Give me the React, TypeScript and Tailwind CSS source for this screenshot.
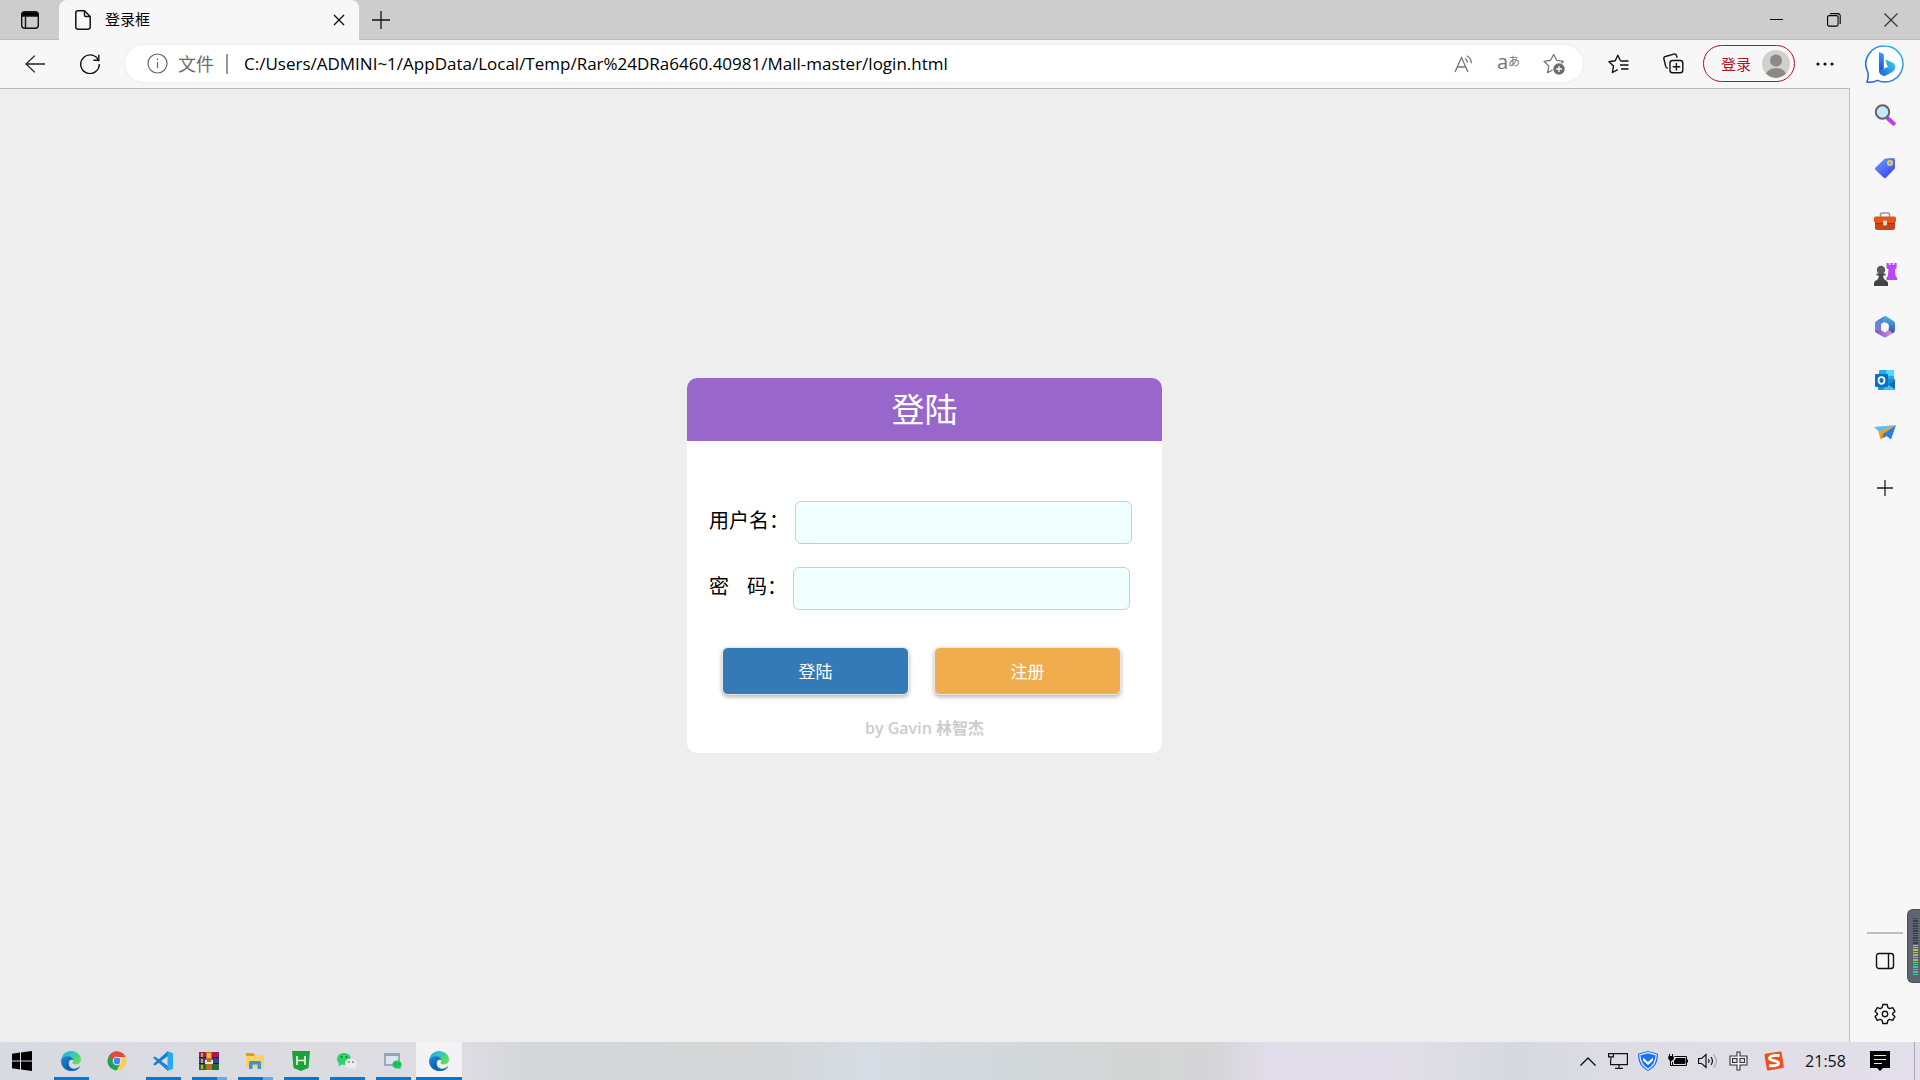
import { useState } from 'react';
import type { ReactNode } from 'react';

interface IconButtonProps {
  label: string;
  className?: string;
  children: ReactNode;
}

function IconButton({ label, className = '', children }: IconButtonProps) {
  return (
    <button type="button" aria-label={label} className={`flex shrink-0 items-center justify-center ${className}`}>
      {children}
    </button>
  );
}

function TabStrip() {
  return (
    <header className="flex h-10 items-stretch bg-[#cdcdcd] shadow-[inset_0_-1px_0_#bcbcbc]">
      <IconButton label="标签页操作" className="w-[59px]">
        <svg width="20" height="20" viewBox="0 0 20 20" fill="none" stroke="#111" strokeWidth="1.4">
          <rect x="1.7" y="2" width="16.6" height="16.3" rx="3" />
          <path d="M5.5 6v12" />
          <path d="M2 6V4.5A2.5 2.5 0 0 1 4.500 2h11A2.500 2.500 0 0 1 18 4.500V6z" fill="#000" />
        </svg>
      </IconButton>
      <div className="flex w-[300px] items-center rounded-t-lg bg-[#f7f7f7] pl-4 pr-2">
        <svg width="16" height="20" viewBox="0 0 16 20" fill="none" stroke="#111" strokeWidth="1.5" strokeLinejoin="round">
          <path d="M3 .8h6.500L15.200 6.500V17a2.200 2.200 0 0 1-2.200 2.200H3A2.200 2.200 0 0 1 .8 17V3A2.200 2.200 0 0 1 3 .8z" />
          <path d="M9.500 1v4.200a1.300 1.300 0 0 0 1.300 1.300H15" />
        </svg>
        <span className="ml-3.5 flex-1 pb-0.5 text-[15px] leading-5">登录框</span>
        <IconButton label="关闭标签页" className="size-6">
          <svg width="12" height="12" viewBox="0 0 12 12" stroke="#111" strokeWidth="1.4">
            <path d="M1 1l10 10M11 1L1 11" />
          </svg>
        </IconButton>
      </div>
      <IconButton label="新建标签页" className="w-11">
        <svg width="18" height="18" viewBox="0 0 18 18" stroke="#111" strokeWidth="1.3">
          <path d="M9 0v18M0 9h18" />
        </svg>
      </IconButton>
      <div className="ml-auto flex">
        <IconButton label="最小化" className="w-[57px]">
          <svg width="14" height="14" viewBox="0 0 14 14" stroke="#000">
            <path d="M0 6.500h13" />
          </svg>
        </IconButton>
        <IconButton label="还原" className="w-[57px]">
          <svg width="14" height="14" viewBox="0 0 14 14" fill="none" stroke="#000" strokeWidth="1.100">
            <rect x=".6" y="2.600" width="10.500" height="10.500" rx="1.500" />
            <path d="M3 .6h8a2.200 2.200 0 0 1 2.200 2.200V11" />
          </svg>
        </IconButton>
        <IconButton label="关闭" className="w-[58px]">
          <svg width="14" height="14" viewBox="0 0 14 14" stroke="#333" strokeWidth="1.200">
            <path d="M.5 .5l13 13M13.500 .5l-13 13" />
          </svg>
        </IconButton>
      </div>
    </header>
  );
}

function Toolbar() {
  const [url, setUrl] = useState('C:/Users/ADMINI~1/AppData/Local/Temp/Rar%24DRa6460.40981/Mall-master/login.html');

  return (
    <div className="flex h-12 items-center gap-[15px] bg-[#f7f7f7] pb-px pl-[15px] pr-[5px]">
      <IconButton label="返回" className="size-10">
        <svg width="20" height="18" viewBox="0 0 20 18" fill="none" stroke="#222" strokeWidth="1.300">
          <path d="M9.800 .6L1 9l8.800 8.400M1 9h19" />
        </svg>
      </IconButton>
      <IconButton label="刷新" className="size-10">
        <svg width="20" height="20" viewBox="0 0 20 20" fill="none" stroke="#111" strokeWidth="1.400">
          <path d="M18.800 7.200A9.300 9.300 0 1 0 19.300 10" />
          <path d="M18.800 .8v5.500h-5.500" />
        </svg>
      </IconButton>

      {/* Address bar */}
      <div className="flex h-[37px] min-w-0 flex-1 items-center rounded-full bg-white pl-[22px] pr-[7px] shadow-[0_0_3px_#e2e2e2]">
        <svg width="21" height="21" viewBox="0 0 21 21" fill="none" stroke="#6b6b6b" strokeWidth="1.200" className="shrink-0">
          <circle cx="10.500" cy="10.500" r="9.500" />
          <path d="M10.500 9v6.200M10.500 5.500v1.700" />
        </svg>
        <span className="ml-2.5 shrink-0 text-lg leading-6 text-[#6b6b6b]">文件</span>
        <span className="ml-3 mr-4 h-5 w-0.5 shrink-0 bg-[#9a9a9a]" />
        <input
          aria-label="地址栏"
          value={url}
          onChange={(e) => setUrl(e.target.value)}
          className="min-w-0 flex-1 bg-transparent text-[17px] leading-6 text-black outline-none"
        />
        <IconButton label="大声朗读" className="h-8 w-[45px]">
          <svg width="20" height="18" viewBox="0 0 20 18" fill="none" stroke="#757575" strokeWidth="1.300">
            <path d="M1 17L7.500 2.500L14 17M3.200 12h8.600" />
            <path d="M11 3.500c1.500 .8 2.300 2.200 2.400 4M13 .8c2.700 1.500 4.200 4 4.300 7.500" />
          </svg>
        </IconButton>
        <IconButton label="翻译" className="h-8 w-[45px] pb-1 text-[#757575]">
          <span className="text-xl leading-6">a</span>
          <span className="text-xs leading-6">あ</span>
        </IconButton>
        <IconButton label="添加到收藏夹" className="h-8 w-[45px]">
          <svg width="22" height="22" viewBox="0 0 22 22" fill="none" stroke="#757575" strokeWidth="1.300" strokeLinejoin="round">
            <path d="M20.500 8.300l-6.800-1L10.700 1.500L7.600 7.300L1 8.300l4.800 4.700L4.600 19.600l5-2.600" />
            <path d="M20.500 8.300l-2.200 2" />
            <circle cx="16" cy="16" r="5.700" fill="#6b6b6b" stroke="none" />
            <path d="M16 13v6M13 16h6" stroke="#fff" />
          </svg>
        </IconButton>
      </div>

      <IconButton label="收藏夹" className="size-10">
        <svg width="21" height="20" viewBox="0 0 21 20" fill="none" stroke="#111" strokeWidth="1.400" strokeLinejoin="round">
          <path d="M12.500 6.800L9.800 1.200L7.200 6.800L1 7.700l4.500 4.400L4.400 18.500l5.400-2.900" />
          <path d="M12.500 7h8M12 11h8.500M13 15h7.500" />
        </svg>
      </IconButton>
      <IconButton label="集锦" className="size-10">
        <svg width="21" height="21" viewBox="0 0 21 21" fill="none" stroke="#111" strokeWidth="1.400" strokeLinejoin="round">
          <rect x="7" y="7.500" width="12.800" height="12.300" rx="2.500" />
          <path d="M13.400 10v7.500M9.700 13.700h7.500" />
          <path d="M4.800 15.200c-1.200 0-1.800-.8-2.100-1.800L.9 6c-.3-1.200 .3-2.200 1.500-2.500L11 1.100c1.200-.3 2.100 .3 2.500 1.500l.6 2.200" />
        </svg>
      </IconButton>
      <div className="-ml-[5px] flex items-center gap-2.5">
        <button
          type="button"
          className="flex h-[37px] w-[92px] items-center justify-between rounded-full border border-[#b0141c] pl-[17px] pr-1 text-[15px] leading-5 text-[#b0141c]"
        >
          登录
          <svg width="28" height="28" viewBox="0 0 28 28">
            <circle cx="14" cy="14" r="14" fill="#d2d0ce" />
            <circle cx="14" cy="10.500" r="6" fill="#8c8884" />
            <path d="M4 23.500c1.800-3.600 5.400-5.300 10-5.300s8.200 1.700 10 5.300A14 14 0 0 1 4 23.500z" fill="#8c8884" />
          </svg>
        </button>
        <IconButton label="设置及其他" className="size-10">
          <svg width="18" height="4" viewBox="0 0 18 4" fill="#111">
            <circle cx="2" cy="2" r="1.600" />
            <circle cx="9" cy="2" r="1.600" />
            <circle cx="16" cy="2" r="1.600" />
          </svg>
        </IconButton>
      </div>
    </div>
  );
}

function LoginCard() {
  const [username, setUsername] = useState('');
  const [password, setPassword] = useState('');

  const inputClass = 'h-[43px] w-[337px] rounded-md border border-[#ccc] bg-[#f0ffff] px-3 text-base outline-none';
  const buttonClass =
    'h-12 w-[187px] rounded-md border border-[#e8e8e8] pt-0.5 text-[17px] leading-6 text-white shadow-[0_2px_4px_rgba(0,0,0,0.3)]';

  return (
    <form className="w-[475px] overflow-hidden rounded-[10px] bg-white" onSubmit={(e) => e.preventDefault()}>
      <h1 className="bg-[#9966cc] text-center text-[33px] leading-[63px] text-white">登陆</h1>

      <div className="flex flex-col gap-[23px] pl-[22px] pt-[60px]">
        <div className="flex items-center gap-1.5">
          <label htmlFor="username" className="pb-1 text-xl leading-7">
            用户名：
          </label>
          <input
            id="username"
            type="text"
            value={username}
            onChange={(e) => setUsername(e.target.value)}
            className={inputClass}
          />
        </div>
        <div className="flex items-center gap-1.5">
          <label htmlFor="password" className="flex gap-[18px] pb-1 text-xl leading-7">
            <span>密</span>
            <span>码：</span>
          </label>
          <input
            id="password"
            type="password"
            value={password}
            onChange={(e) => setPassword(e.target.value)}
            className={inputClass}
          />
        </div>
      </div>

      <div className="flex gap-[25px] pl-[35px] pt-[37px]">
        <button type="submit" className={`${buttonClass} bg-[#337ab7]`}>
          登陆
        </button>
        <button type="button" className={`${buttonClass} bg-[#f0ad4e]`}>
          注册
        </button>
      </div>

      <p className="pb-[13px] pt-[21px] text-center text-base font-semibold leading-6 text-[#ccc]">by Gavin 林智杰</p>
    </form>
  );
}

const sidebarApps = [
  {
    label: '搜索',
    icon: (
      <svg width="22" height="22" viewBox="0 0 22 22">
        <path d="M14 14.500l5.500 5" stroke="#c03bf0" strokeWidth="4.200" strokeLinecap="round" />
        <circle cx="8.500" cy="8" r="6.700" fill="#c5e6fb" stroke="#626262" strokeWidth="2" />
      </svg>
    ),
  },
  {
    label: '购物',
    icon: (
      <svg width="22" height="22" viewBox="0 0 22 22">
        <defs>
          <linearGradient id="tag" x1="0" y1="0" x2=".7" y2="1">
            <stop stopColor="#67a2fa" />
            <stop offset="1" stopColor="#3b48f2" />
          </linearGradient>
        </defs>
        <path d="M12 1.500l7-.5a2 2 0 0 1 2 2v7.500c0 .8-.3 1.300-.8 1.800l-8 8.300c-.8 .8-1.800 .8-2.600 0l-8-7.600c-.8-.8-.8-1.700 0-2.500l8.500-8.300c.5-.5 1.100-.7 1.900-.7z" fill="url(#tag)" />
        <circle cx="16" cy="6" r="2.300" fill="#8fa6c8" stroke="#fbd52e" strokeWidth="1.500" />
      </svg>
    ),
  },
  {
    label: '工具',
    icon: (
      <svg width="24" height="20" viewBox="0 0 24 20">
        <path d="M7.500 6V3.500A1.500 1.500 0 0 1 9 2h6a1.500 1.500 0 0 1 1.500 1.500V6" fill="none" stroke="#999" strokeWidth="1.600" />
        <path d="M2 10h20v7a2 2 0 0 1-2 2H4a2 2 0 0 1-2-2z" fill="#cb4514" />
        <path d="M2.500 5.500h19a1.500 1.500 0 0 1 1.500 1.500v3c0 1-1 2-2 2H3c-1 0-2-1-2-2V7a1.500 1.500 0 0 1 1.500-1.500z" fill="#e3571c" />
        <path d="M2 12h20v1H2z" fill="#a5350c" />
        <rect x="10" y="9.500" width="4" height="5" rx="1" fill="#d8d8d8" />
      </svg>
    ),
  },
  {
    label: '游戏',
    icon: (
      <svg width="24" height="24" viewBox="0 0 24 24">
        <path d="M13.500 1h2.300v2h1.600V1h2.300v2h1.600V1h2.300v5l-1.600 1.500l.6 6.500l1.400 1.500V18H13.500v-2.500l1.400-1.500l.6-6.500L13.500 6z" fill="#b847f5" />
        <circle cx="8" cy="8" r="4.200" fill="#5a5a5a" />
        <path d="M3.500 11.500h9v2h-2.300c0 2.500 1 4 2.800 5.500H3c1.800-1.500 2.800-3 2.800-5.500H3.500z" fill="#4a4a4a" />
        <path d="M2.500 18.500h11l1.500 2V24H1v-3.500z" fill="#424242" />
      </svg>
    ),
  },
  {
    label: 'Microsoft 365',
    icon: (
      <svg width="22" height="24" viewBox="0 0 22 24">
        <defs>
          <linearGradient id="m1" x1="1" y1="0" x2="0" y2="1">
            <stop stopColor="#3d73d6" />
            <stop offset="1" stopColor="#7c8be8" />
          </linearGradient>
          <linearGradient id="m2" x1="0" y1="0" x2="1" y2="0">
            <stop stopColor="#8550b6" />
            <stop offset="1" stopColor="#d293e4" />
          </linearGradient>
          <linearGradient id="m3" x1="0" y1="0" x2="0" y2="1">
            <stop stopColor="#48b6e8" />
            <stop offset="1" stopColor="#3c4eb2" />
          </linearGradient>
        </defs>
        <path d="M9.500 1.800L2.500 6A3 3 0 0 0 1 8.500v8l6-1.500V9l4.500-3l1-4.500c-1-.6-2-.4-3 .3z" fill="url(#m1)" />
        <path d="M1 15.500c0 1 .5 2 1.500 2.600l7 4c1 .6 2 .6 3 0l6-3.600l-4-3.500l-3.500 2.500L6 14.500z" fill="url(#m2)" />
        <path d="M10.500 1.500c1-.4 1.600-.3 2.500 .3L19.500 6A3 3 0 0 1 21 8.500V15c0 1.500-.8 2.700-2.500 3.600L14.500 15V9L8 6z" fill="url(#m3)" />
        <circle cx="11" cy="12" r="3.800" fill="#f7f7f7" />
      </svg>
    ),
  },
  {
    label: 'Outlook',
    icon: (
      <svg width="22" height="22" viewBox="0 0 22 22">
        <rect x="5" y="1" width="15" height="13" rx="1" fill="#28a8ea" />
        <path d="M12 1h7a1 1 0 0 1 1 1v5h-8z" fill="#50d9ff" />
        <path d="M4 10h17v10a1 1 0 0 1-1 1H5a1 1 0 0 1-1-1z" fill="#1490df" />
        <path d="M21 10.500L8 21h12.500c.5 0 .5-.5 .5-1z" fill="#37c2f5" />
        <path d="M21 11l-7 4.500l7 4.500z" fill="#1068ad" />
        <rect x="1" y="5" width="13" height="13" rx="1.200" fill="#0a70c6" />
        <ellipse cx="7.500" cy="11.500" rx="3" ry="3.300" fill="none" stroke="#fff" strokeWidth="1.700" />
      </svg>
    ),
  },
  {
    label: 'Drop',
    icon: (
      <svg width="22" height="18" viewBox="0 0 22 18">
        <path d="M22 1L0 3l5.500 5z" fill="#5cbcf4" />
        <path d="M22 1l-5 14.500l-4.500-3.500l-2.500 2l-2-4.500z" fill="#2b7de6" />
        <path d="M22 1L4.500 7.500l2 8L9 10z" fill="#f3a01c" />
        <path d="M9 10l-2.500 5.500l4.500-3.500z" fill="#b86b10" />
      </svg>
    ),
  },
];

function Sidebar() {
  return (
    <aside className="flex w-[70px] shrink-0 flex-col items-center bg-[#f7f7f7] pb-0.5">
      <IconButton label="必应" className="h-12 w-full">
        <svg width="40" height="40" viewBox="0 0 40 40">
          <defs>
            <linearGradient id="bubble" x1="1" y1="0" x2="0" y2="1">
              <stop stopColor="#28c1f3" />
              <stop offset="1" stopColor="#2155d9" />
            </linearGradient>
            <linearGradient id="bingStem" x1="0" y1="0" x2="0" y2="1">
              <stop stopColor="#2fa4f0" />
              <stop offset="1" stopColor="#1b4fd6" />
            </linearGradient>
            <linearGradient id="bingBowl" x1="1" y1="0" x2="0" y2="1">
              <stop stopColor="#35d6e6" />
              <stop offset="1" stopColor="#1f62e0" />
            </linearGradient>
          </defs>
          <path
            d="M20 2a18 18 0 1 1-7.500 34.400c-3 1.500-6 2.200-10.500 1.600c1.600-3.500 1.300-6 1-9.500A18 18 0 0 1 20 2z"
            fill="#fff"
            stroke="url(#bubble)"
            strokeWidth="1.500"
          />
          <path d="M14 8l4 1.800c.5 .3 .8 .7 .8 1.300V25L14 28z" fill="url(#bingStem)" />
          <path d="M20.500 15.500l7 3c2 1 2.700 2.500 2.700 4.500c0 2.300-1 3.700-3 5l-5.700 3.300c-1.500 .8-3 .8-4.500 0C15 30.200 14 29 14 27l9.500-4.500l-1.500-1z" fill="url(#bingBowl)" />
        </svg>
      </IconButton>
      {sidebarApps.map((app) => (
        <IconButton key={app.label} label={app.label} className="h-[53px] w-full pr-px">
          {app.icon}
        </IconButton>
      ))}
      <IconButton label="自定义" className="h-[58px] w-full">
        <svg width="16" height="16" viewBox="0 0 16 16" stroke="#222" strokeWidth="1.300">
          <path d="M8 0v16M0 8h16" />
        </svg>
      </IconButton>

      <div className="mt-auto h-0.5 w-9 bg-[#bdbdbd]" />
      <IconButton label="隐藏边栏" className="h-[53px] w-full">
        <svg width="20" height="18" viewBox="0 0 20 18" fill="none" stroke="#111" strokeWidth="1.400">
          <rect x="1.500" y="1.500" width="17" height="15" rx="2.500" />
          <path d="M13.500 1.500v15" />
        </svg>
      </IconButton>
      <IconButton label="设置" className="h-[53px] w-full">
        <svg width="22" height="22" viewBox="0 0 22 22" fill="none" stroke="#111" strokeWidth="1.400" strokeLinejoin="round">
          <path d="M8.800 1.500h4.400l.7 3.100l1.800 1l3-1l2.200 3.800l-2.300 2.100v1l2.300 2.100l-2.200 3.800l-3-1l-1.800 1l-.7 3.100H8.800l-.7-3.100l-1.800-1l-3 1l-2.200-3.800l2.300-2.100v-1L1.100 8.400l2.200-3.800l3 1l1.800-1z" />
          <circle cx="11" cy="11" r="2.700" />
        </svg>
      </IconButton>
    </aside>
  );
}

function EdgeIcon() {
  return (
    <svg width="20" height="20" viewBox="0 0 20 20">
      <defs>
        <linearGradient id="edgeTop" x1="0" y1="0" x2="1" y2=".6">
          <stop stopColor="#2aa5e0" />
          <stop offset=".5" stopColor="#35c5c0" />
          <stop offset="1" stopColor="#66dd4f" />
        </linearGradient>
        <linearGradient id="edgeLow" x1="0" y1="0" x2=".6" y2="1">
          <stop stopColor="#1b8ad8" />
          <stop offset="1" stopColor="#0f55a5" />
        </linearGradient>
      </defs>
      <path d="M.2 9C.8 3.800 5 0 10 0c5.500 0 10 3.800 10 8.600c0 3-2.200 4.900-5 4.900c-2.400 0-3.600-.8-3.600-1.500c0-.5 .8-.9 .8-2.300C12.200 7.500 10 5.800 7 5.800C4 5.800 1.500 7 .2 9z" fill="url(#edgeTop)" />
      <path d="M.1 10C.2 7 3.500 5.200 7 5.200c3 0 5.300 1.800 5.400 4C10 8 7.500 9.800 7.500 12.800c0 3.500 3 6 6.500 5.500c-1.200 1-2.500 1.500-4 1.600C4.500 20 0 15.500 .1 10z" fill="url(#edgeLow)" />
      <path d="M8.500 9.500c-2 2.800-.8 7 3 8c2.600 .6 5-.2 6.800-2c.4-.4 .8 0 .5 .5c-1.800 3-5 4.300-8.300 3.900C6.500 19 4.500 12.500 8.500 9.500z" fill="#1166b8" />
    </svg>
  );
}

type TaskState = 'idle' | 'running' | 'stacked' | 'active';

const taskbarApps: { label: string; state: TaskState; icon: ReactNode }[] = [
  { label: 'Microsoft Edge', state: 'running', icon: <EdgeIcon /> },
  {
    label: 'Google Chrome',
    state: 'idle',
    icon: (
      <svg width="20" height="20" viewBox="0 0 20 20">
        <circle cx="10" cy="10" r="9.500" fill="#fdd04a" />
        <path d="M10 10L1.800 5.200A9.500 9.500 0 0 1 18.200 5.300L18.500 6H10z" fill="#de4b3f" />
        <path d="M10 10L1.800 5.200A9.500 9.500 0 0 0 9.600 19.500L13.500 12z" fill="#1ea25a" />
        <path d="M10 .5a9.500 9.500 0 0 1 8.300 5.300H10l-4 3.500l-4.200-4A9.500 9.500 0 0 1 10 .5z" fill="#de4b3f" />
        <circle cx="10" cy="10" r="4.300" fill="#fff" />
        <circle cx="10" cy="10" r="3.400" fill="#4286f5" />
      </svg>
    ),
  },
  {
    label: 'Visual Studio Code',
    state: 'running',
    icon: (
      <svg width="20" height="20" viewBox="0 0 20 20">
        <path d="M0 6.800l2-1.300L15 15v5z" fill="#1a86cf" />
        <path d="M0 13.200l2 1.300L15 5V0z" fill="#1580c8" />
        <path d="M14.500 0L20 2.200v15.600L14.500 20z" fill="#27a9f3" />
      </svg>
    ),
  },
  {
    label: 'WinRAR',
    state: 'stacked',
    icon: (
      <svg width="20" height="20" viewBox="0 0 20 20">
        <path d="M0 1h20v6H0z" fill="#a51d4d" />
        <path d="M0 7h20v6H0z" fill="#3f3f96" />
        <path d="M0 13h20v6H0z" fill="#21702f" />
        <path d="M0 6h20v1H0zM0 12h20v1H0z" fill="#20201f" />
        <path d="M2 2h2v4H2zM2 8h2v4H2zM2 14h2v4H2z" fill="#d9a23a" />
        <path d="M7 1h6v18H7z" fill="#b96f1d" />
        <path d="M8 2h4v5H8z" fill="#f5b63b" />
        <path d="M6 9h2v4H6zM12 9h2v4h-2zM8 11h4v2H8z" fill="#e9e4d8" />
      </svg>
    ),
  },
  {
    label: '文件资源管理器',
    state: 'stacked',
    icon: (
      <svg width="20" height="18" viewBox="0 0 20 18">
        <path d="M1 1h7l2 2v3H1z" fill="#e09a13" />
        <path d="M1 4h8l1.500-1H19v13H1z" fill="#fbd367" />
        <path d="M4 17V10.500A1.500 1.500 0 0 1 5.500 9h9a1.500 1.500 0 0 1 1.500 1.500V17h-3.500v-4.500h-5V17z" fill="#3b93d9" />
      </svg>
    ),
  },
  {
    label: 'HBuilder X',
    state: 'running',
    icon: (
      <svg width="20" height="20" viewBox="0 0 20 20">
        <path d="M1 0h18l-1.500 17l-7.500 3l-7.500-3z" fill="#1ea03a" />
        <path d="M6 5v9M14 5v9M6 9.500h8" stroke="#e6f7e6" strokeWidth="1.700" />
      </svg>
    ),
  },
  {
    label: '微信',
    state: 'running',
    icon: (
      <svg width="22" height="18" viewBox="0 0 22 18">
        <path d="M8 1c4 0 7 2.600 7 6s-3 6-7 6c-.9 0-1.700-.1-2.500-.4L2.500 14.500L3 11.500C1.700 10.400 1 8.800 1 7c0-3.400 3-6 7-6z" fill="#2cd36b" />
        <circle cx="5.500" cy="5" r=".9" fill="#136b35" />
        <circle cx="10.500" cy="5" r=".9" fill="#136b35" />
        <path d="M15 6.500c3.400 0 6 2.200 6 5c0 1.400-.6 2.600-1.600 3.500l.4 2.200l-2.400-1c-4.400 1.200-8.400-1-8.400-4.700c0-2.800 2.600-5 6-5z" fill="#ececec" />
        <circle cx="13" cy="10" r=".9" fill="#777" />
        <circle cx="17" cy="10" r=".9" fill="#777" />
      </svg>
    ),
  },
  {
    label: '微信窗口',
    state: 'running',
    icon: (
      <svg width="20" height="18" viewBox="0 0 20 18">
        <rect x="2" y="2" width="14" height="11" fill="#dde5f0" stroke="#8592a8" strokeWidth="1.400" />
        <path d="M1.300 1.300h15.400V4H1.300z" fill="#94a1b6" />
        <path d="M14 8.500c2.700 0 4.800 1.700 4.800 4c0 1.200-.5 2-1.300 2.700v2l-2-.9c-3.500 .7-6.200-1-6.200-3.800c0-2.300 2-4 4.700-4z" fill="#1fc95f" />
        <path d="M11.800 11.500h1v1h-1zM15.500 11.500h1v1h-1z" fill="#0b5a2a" />
      </svg>
    ),
  },
  { label: '登录框 - Microsoft Edge', state: 'active', icon: <EdgeIcon /> },
];

function TaskbarItem({ label, state, icon }: (typeof taskbarApps)[number]) {
  return (
    <button
      type="button"
      aria-label={label}
      className={`flex w-[46px] flex-col items-center ${state === 'active' ? 'bg-[#f3f3f6]' : ''}`}
    >
      <span className="flex flex-1 items-center pt-0.5">{icon}</span>
      {state === 'idle' && <span className="h-[3px]" />}
      {state === 'running' && <span className="h-[3px] w-[35px] bg-[#0078d7]" />}
      {state === 'active' && <span className="h-[3px] w-full bg-[#0078d7]" />}
      {state === 'stacked' && (
        <span className="flex h-[3px] w-[35px]">
          <span className="w-[25px] bg-[#0078d7]" />
          <span className="w-2.5 bg-[#63aae8]" />
        </span>
      )}
    </button>
  );
}

function Taskbar() {
  return (
    <footer className="flex h-[38px] items-stretch bg-[linear-gradient(90deg,#d8dae1_0%,#dddce3_24%,#d3d7d9_28%,#d4d6d7_39%,#d6dce3_45%,#d3d8db_53%,#d4d6d5_59%,#d5d5d7_63%,#e0dce9_66%,#e1dee8_73%,#d6d9df_79%,#dddce4_84%,#e3dfea_100%)]">
      <IconButton label="开始" className="mr-1 w-11">
        <svg width="20" height="20" viewBox="0 0 20 20" fill="#000">
          <path d="M0 2.800l8-1.200v7.900H0zM9 1.400L20 0v9.500H9zM0 10.500h8v7.900L0 17.200zM9 10.500h11V20L9 18.600z" />
        </svg>
      </IconButton>
      {taskbarApps.map((app) => (
        <TaskbarItem key={app.label} {...app} />
      ))}

      {/* System tray */}
      <div className="ml-auto flex items-stretch">
        <IconButton label="显示隐藏的图标" className="w-[30px]">
          <svg width="16" height="9" viewBox="0 0 16 9" fill="none" stroke="#111" strokeWidth="1.400">
            <path d="M.5 8.500L8 1l7.500 7.500" />
          </svg>
        </IconButton>
        <IconButton label="网络" className="w-[30px]">
          <svg width="20" height="18" viewBox="0 0 20 18" fill="none" stroke="#111" strokeWidth="1.200">
            <path d="M6 1.600h13.400v11H2.600V8M11 12.600V16M7 16.400h8" />
            <path d="M.6 1.600h4.800v3.200H.6zM2.900 5v3" />
          </svg>
        </IconButton>
        <IconButton label="电脑管家" className="w-[30px]">
          <svg width="20" height="20" viewBox="0 0 20 20">
            <path d="M10 0l10 2.800C20 10.500 17.500 16.500 10 20C2.500 16.500 0 10.500 0 2.800z" fill="#1d6ff2" />
            <path d="M10 1.700l8.200 2.300c-.2 6-2.400 11-8.200 14.200C4.200 15 2 10 1.800 4z" fill="none" stroke="#e9f2ff" strokeWidth="1.200" />
            <path d="M5 6.500L10 11l5-4.500v3L10 14L5 9.500z" fill="#fff" />
          </svg>
        </IconButton>
        <IconButton label="电源" className="w-[30px]">
          <svg width="20" height="16" viewBox="0 0 20 16" fill="none" stroke="#000" strokeWidth="1">
            <path d="M6.500 3.500h12v9h-14V9" />
            <path d="M8 5.500h9v5H6.500V8z" fill="#000" />
            <path d="M19.500 6.500v3M2.500 8v4.500h2M1.500 1v2.500M4.500 1v2.500" />
            <path d="M.8 3.500h4.400v2.500L4 7.500H2L.8 6z" fill="#000" />
          </svg>
        </IconButton>
        <IconButton label="音量" className="w-[30px]">
          <svg width="20" height="18" viewBox="0 0 20 18" fill="none" stroke="#111" strokeWidth="1.200">
            <path d="M.6 6.500h3L8 2.500v13l-4.400-4h-3z" />
            <path d="M10.500 7c.8 1.200 .8 2.800 0 4M13 5c1.800 2.500 1.800 5.500 0 8" />
            <path d="M15.700 2.500c3.400 4 3.400 9 0 13" stroke="#aaa" />
          </svg>
        </IconButton>
        <IconButton label="输入法：中文" className="w-[30px]">
          <svg width="19" height="20" viewBox="0 0 19 20" fill="#f4f4f8" stroke="#333" strokeWidth="1.100" fillRule="evenodd">
            <path d="M8 1h3v4h7v9h-7v5H8v-5H1V5h7zM3.500 7.500v4H8v-4zM11 7.500v4h4.500v-4z" />
          </svg>
        </IconButton>
        <IconButton label="搜狗输入法" className="w-[42px]">
          <svg width="20" height="20" viewBox="0 0 20 20">
            <path d="M2.500 2.500L16 .5a1.500 1.500 0 0 1 1.700 1.200l2 13.600a1.500 1.500 0 0 1-1.200 1.700L4.500 19.500a1.500 1.500 0 0 1-1.700-1.200L.5 4.500a1.700 1.700 0 0 1 2-2z" fill="#f0501e" />
            <path d="M15.500 4.500C10 4 5.500 5 5.500 7.300c0 3 9 1.700 9 4.900c0 2.200-4.500 3-9.500 2.300" fill="none" stroke="#fff" strokeWidth="2.800" />
          </svg>
        </IconButton>
        <time className="flex w-[61px] items-center justify-center text-base leading-6 text-[#111]">21:58</time>
        <IconButton label="通知" className="w-12">
          <svg width="20" height="20" viewBox="0 0 20 20">
            <path d="M0 0h20v17h-7l-3 3l-3-3H0z" fill="#000" />
            <path d="M4 4.500h12M4 8.500h12M4 12.500h8" stroke="#e8e8ee" strokeWidth="1.100" />
          </svg>
        </IconButton>
        <IconButton label="显示桌面" className="ml-2.5 w-1.5 border-l border-[#a9a8b0]">
          <span />
        </IconButton>
      </div>
    </footer>
  );
}

const meterBars = [
  ...Array(11).fill('bg-[#3b3f4b]'),
  ...Array(4).fill('bg-[#b9c23c]'),
  ...Array(4).fill('bg-[#86c46a]'),
  ...Array(5).fill('bg-[#45c2a4]'),
];

// Volume meter docked on the screen's right edge
function LevelMeter() {
  return (
    <div className="absolute bottom-[97px] right-0 flex h-[74px] w-[13px] flex-col items-end gap-px rounded-l-md border border-r-0 border-[#484c58] bg-[#5f6473] pr-0.5 pt-2">
      {meterBars.map((color, i) => (
        <span key={i} className={`w-[5px] grow ${color}`} />
      ))}
      <span className="h-1.5" />
    </div>
  );
}

export default function App() {
  return (
    <div className="relative flex min-h-screen flex-col bg-[#eee] font-['Open_Sans','Noto_Sans_CJK_SC',sans-serif] text-black">
      <TabStrip />
      <div className="flex flex-1 items-stretch">
        <div className="flex min-w-0 flex-1 flex-col">
          <Toolbar />
          <main className="flex flex-1 items-center justify-center border-r border-t border-[#bdbdbd] bg-[#eee]">
            <LoginCard />
          </main>
        </div>
        <Sidebar />
      </div>
      <Taskbar />
      <LevelMeter />
    </div>
  );
}
